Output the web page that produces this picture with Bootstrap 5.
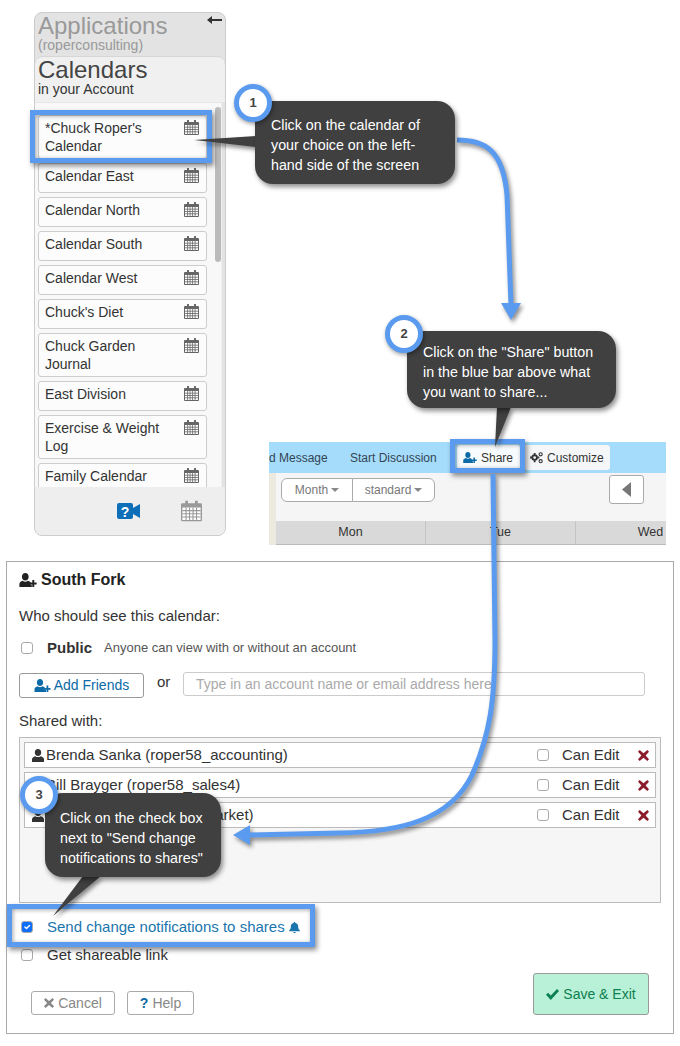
<!DOCTYPE html>
<html lang="en">
<head>
    <meta charset="UTF-8">
    <meta name="viewport" content="width=device-width, initial-scale=1.0">
    <title>Share a calendar</title>
    <link href="https://cdn.jsdelivr.net/npm/bootstrap@5.3.0/dist/css/bootstrap.min.css" rel="stylesheet">
    <style>
        body { font-family: "Liberation Sans", Arial, sans-serif; background: #fff; color: #333; margin: 0; }
        .sheet { width: 680px; height: 1046px; overflow: hidden; }
        .ico { display: inline-block; fill: currentColor; flex: none; }

        /* sidebar */
        .top-area { padding-top: 12px; height: 545px; }
        .apps { width: 192px; height: 524px; margin-left: 34px; background: #e3e3e3; border: 1px solid #ccc; border-radius: 8px; overflow: hidden; }
        .apps-head { height: 43px; padding: 0 3px; color: #999; }
        .apps-title { font-size: 24px; line-height: 25px; }
        .apps-sub { font-size: 14px; line-height: 14px; }
        .back-ico { color: #333; margin-top: 3px; }
        .cal-head { height: 46px; background: #f0f0f0; border-radius: 8px 8px 0 0; border-top: 1px solid #d6d6d6; padding: 0 3px; color: #444; }
        .cal-title { font-size: 24px; line-height: 25px; }
        .cal-sub { font-size: 14px; line-height: 15px; color: #333; }
        .cal-scroll { height: 386px; background: #f8f8f8; overflow: hidden; padding: 4px 0 0 3px; border-right: 1px solid #eee; border-top: 1px solid #e6e6e6; margin-right: 3px; }
        .cal-list { width: 169px; gap: 4px; margin-top: 8px; flex: none; }
        .cal-item { min-height: 30px; flex: none; padding: 3px 7px 3px 6px; border: 1px solid #ccc; border-radius: 3px; background: #fcfcfc; font-size: 14px; line-height: 18px; color: #333; }
        .cal-item span { width: 128px; }
        .cal-ico { color: #666; margin-top: 1px; }
        .thumb { width: 8px; height: 155px; margin-left: 8px; background: #bbb; border-radius: 4px; }
        .apps-foot { height: 48px; background: #eee; padding-left: 82px; gap: 41px; }

        /* calendar strip */
        .strip { width: 397px; height: 103px; margin: 430px 0 0 43px; background: #f5f5f5; overflow: hidden; }
        .strip-bar { height: 31px; background: #a5dcfb; font-size: 12px; color: #345; }
        .bar-link { width: 81px; }
        .bar-link2 { width: 107px; }
        .bar-btn { height: 25px; border-radius: 3px; background: #f4f6f8; padding: 0 6px; gap: 4px; color: #333; }
        .bar-share { background: #f8fbfd; margin-right: 4px; width: 63px; }
        .bar-share .ico { color: #0d6aa8; }
        .strip-body { border-left: 7px solid #ece9de; height: 72px; }
        .strip-tools { height: 48px; padding: 5px 22px 0 5px; }
        .view-btn { height: 24px; padding: 0; font-size: 12px; line-height: 22px; color: #777; background: #fff; border: 1px solid #aaa; }
        .view-month { width: 72px; }
        .view-std { width: 83px; }
        .caret-dn { display: inline-block; border: 4px solid transparent; border-top-color: #888; border-bottom-width: 0; margin-left: 3px; vertical-align: 2px; }
        .prev-btn { width: 35px; height: 29px; margin-top: -3px; padding: 0; background: #fff; border: 1px solid #aaa; border-radius: 3px; }
        .day-row { height: 24px; background: #d9d9d9; border-bottom: 1px solid #bbb; font-size: 12.5px; line-height: 23px; color: #333; width: 450px; }
        .day-cell { width: 150px; flex: none; text-align: center; border-right: 1px solid #c4c4c4; }

        /* dialog */
        .share-dlg { width: 668px; height: 473px; margin: 16px 0 0 6px; border: 1px solid #aaa; padding: 8px 12px 0; font-size: 15px; line-height: 20px; color: #333; }
        .dlg-title { font-size: 16px; font-weight: 700; color: #222; gap: 4px; }
        .dlg-who { margin-top: 16px; }
        .check-row { margin-top: 12px; padding-left: 2px; }
        .form-check-input.tick { width: 12px; height: 12px; margin: 0 14px 0 0; flex: none; border-color: #aaa; border-radius: 3px; }
        .pub-label { font-weight: 700; margin-right: 12px; }
        .pub-note { font-size: 13px; color: #555; }
        .add-row { margin-top: 14px; }
        .add-btn { width: 125px; height: 25px; padding: 0; margin-top: 1px; background: #fff; border: 1px solid #999; border-radius: 3px; color: #0d6aa8; font-size: 14px; gap: 3px; }
        .add-or { width: 39px; padding-left: 13px; }
        .add-input { width: 462px; height: 24px; padding: 0 12px; font-size: 14px; border: 1px solid #ccc; border-radius: 3px; }
        .add-input::placeholder { color: #aaa; }
        .shared-label { margin-top: 13px; }
        .shared-box { height: 166px; margin-top: 6px; padding: 4px; gap: 4px; background: #f6f6f6; border: 1px solid #bbb; }
        .shared-row { height: 26px; background: #fff; border: 1px solid #bbb; padding-left: 7px; }
        .shared-name { width: 505px; gap: 2px; }
        .shared-can { width: 76px; }
        .shared-row .form-check-input.tick { margin-right: 13px; }
        .del-x { color: #8c1c2c; }
        .send-row { margin-top: 14px; color: #1a75ad; }
        .send-row .ico { margin-left: 4px; }
        .get-row { margin-top: 8px; }
        .dlg-foot { margin-top: 8px; padding: 0 12px; height: 42px; }
        .foot-btn { height: 24px; padding: 0; background: #fff; border: 1px solid #aaa; border-radius: 3px; color: #888; font-size: 14px; gap: 4px; }
        .cancel-btn { width: 84px; margin-right: 12px; }
        .help-btn { width: 67px; }
        .help-btn b { color: #0d6aa8; }
        .save-btn { width: 116px; height: 42px; padding: 0; background: #b9f0d8; border: 1px solid #999; border-radius: 3px; color: #0d8050; font-size: 14px; gap: 4px; }

        /* annotations */
        .hl-box { position: absolute; border: 5px solid #5a9bef; box-shadow: 2px 3px 5px rgba(0,0,0,.45), inset 1px 1px 4px rgba(0,0,0,.35); }
        #hl1 { left: 30px; top: 110px; width: 182px; height: 53px; }
        #hl2 { left: 450px; top: 439px; width: 75px; height: 34px; }
        #hl3 { left: 7px; top: 904px; width: 308px; height: 43px; }
        .arrows { position: absolute; left: 0; top: 0; filter: drop-shadow(2px 3px 2px rgba(0,0,0,.45)); }
        .tip-box { position: absolute; background: #404040; color: #fff; border-radius: 18px; font-size: 14.25px; line-height: 20px; box-shadow: 2px 3px 5px rgba(0,0,0,.45); }
        #tip1 { left: 255px; top: 101px; width: 200px; height: 83px; padding: 14px 16px; }
        #tip2 { left: 407px; top: 331px; width: 209px; height: 77px; padding: 11px 16px; }
        #tip3 { left: 45px; top: 793px; width: 176px; height: 84px; padding: 15px 15px; }
        .num { position: absolute; width: 38px; height: 38px; border: 5px solid #5a9bef; border-radius: 50%; background: #fff; font-size: 13px; font-weight: 700; line-height: 28px; text-align: center; color: #444; box-shadow: 1px 2px 4px rgba(0,0,0,.4); }
        #num1 { left: 234px; top: 84px; }
        #num2 { left: 385px; top: 315px; }
        #num3 { left: 20px; top: 776px; }
    </style>
</head>
<body>
    <svg width="0" height="0" class="position-absolute">
        <symbol id="i-cal" viewBox="0 0 15 15">
            <path d="M3 2V.8a1 1 0 0 1 2 0V2h5V.8a1 1 0 0 1 2 0V2h2a1 1 0 0 1 1 1v11a1 1 0 0 1-1 1H1a1 1 0 0 1-1-1V3a1 1 0 0 1 1-1z" fill="currentColor"/>
            <path d="M1 5h13v9H1z" fill="#fff"/>
            <path d="M1 7.2h13M1 9.5h13M1 11.8h13M3.6 5v9M6.1 5v9M8.6 5v9M11.1 5v9" stroke="currentColor" stroke-width=".8" fill="none"/>
        </symbol>
        <symbol id="i-user-plus" viewBox="0 0 16 13">
            <path d="M5.5 0C7.4 0 8.6 1.4 8.6 3.4S7.5 7 5.5 7 2.4 5.4 2.4 3.4 3.6 0 5.5 0zM0 13v-2.6C0 8.7 1.3 7.700 3.100 7.200c.7.6 1.500.9 2.400.9s1.700-.3 2.400-.9c1 .3 1.800.7 2.400 1.300V11h1.200v2z"/>
            <path d="M12 6.500h1.800v2.400H16v1.800h-2.200V13H12v-2.300H9.800V8.900H12z"/>
        </symbol>
        <symbol id="i-user" viewBox="0 0 12 13">
            <path d="M6 0c2 0 3.200 1.400 3.200 3.400S8 7 6 7 2.800 5.400 2.800 3.400 4 0 6 0zM0 13v-2.600C0 8.700 1.400 7.700 3.300 7.200c.7.600 1.700.9 2.700.9s2-.3 2.700-.9c1.900.5 3.300 1.500 3.300 3.200V13z"/>
        </symbol>
        <symbol id="i-x" viewBox="0 0 12 12">
            <path d="M1.800 0L6 3.500 10.200 0 12 2 8.300 6 12 10l-1.800 2L6 8.500 1.800 12 0 10l3.700-4L0 2z"/>
        </symbol>
        <symbol id="i-gears" viewBox="0 0 14 13">
            <path d="M5 2.500a3.500 3.500 0 1 1 0 7 3.500 3.500 0 0 1 0-7zm0 2a1.500 1.500 0 1 0 0 3 1.500 1.500 0 0 0 0-3z"/>
            <path d="M4 1h2v2H4zM4 9h2v2H4zM0 5h2v2H0zM8 5h2v2H8z"/>
            <circle cx="11.500" cy="2.500" r="1.700" fill="none" stroke="currentColor" stroke-width="1.200"/>
            <circle cx="11.500" cy="10" r="1.700" fill="none" stroke="currentColor" stroke-width="1.200"/>
        </symbol>
        <symbol id="i-bell" viewBox="0 0 12 12">
            <path d="M6 0a1 1 0 0 1 1 1c2 .4 3 1.900 3 4 0 2 .5 3 2 4.500V10H0v-.5C1.500 8 2 7 2 5c0-2.100 1-3.600 3-4a1 1 0 0 1 1-1zM4.500 10.800h3a1.500 1.200 0 0 1-3 0z"/>
        </symbol>
        <symbol id="i-check" viewBox="0 0 13 11">
            <path d="M0 5.800L2 3.800 4.800 6.600 11 0l2 2-8.200 9z"/>
        </symbol>
    </svg>

    <div class="sheet position-relative">
        <div class="top-area d-flex">
            <div class="apps d-flex flex-column">
                <div class="apps-head d-flex justify-content-between">
                    <div>
                        <div class="apps-title">Applications</div>
                        <div class="apps-sub">(roperconsulting)</div>
                    </div>
                    <svg class="back-ico" width="15" height="8" viewBox="0 0 15 8"><path d="M5 0v3h10v2H5v3L0 4z" fill="currentColor"/></svg>
                </div>
                <div class="cal-head">
                    <div class="cal-title">Calendars</div>
                    <div class="cal-sub">in your Account</div>
                </div>
                <div class="cal-scroll d-flex">
                    <div class="cal-list d-flex flex-column">
                        <div class="cal-item d-flex justify-content-between"><span>*Chuck Roper's Calendar</span><svg class="ico cal-ico" width="15" height="15"><use href="#i-cal"/></svg></div>
                        <div class="cal-item d-flex justify-content-between"><span>Calendar East</span><svg class="ico cal-ico" width="15" height="15"><use href="#i-cal"/></svg></div>
                        <div class="cal-item d-flex justify-content-between"><span>Calendar North</span><svg class="ico cal-ico" width="15" height="15"><use href="#i-cal"/></svg></div>
                        <div class="cal-item d-flex justify-content-between"><span>Calendar South</span><svg class="ico cal-ico" width="15" height="15"><use href="#i-cal"/></svg></div>
                        <div class="cal-item d-flex justify-content-between"><span>Calendar West</span><svg class="ico cal-ico" width="15" height="15"><use href="#i-cal"/></svg></div>
                        <div class="cal-item d-flex justify-content-between"><span>Chuck's Diet</span><svg class="ico cal-ico" width="15" height="15"><use href="#i-cal"/></svg></div>
                        <div class="cal-item d-flex justify-content-between"><span>Chuck Garden Journal</span><svg class="ico cal-ico" width="15" height="15"><use href="#i-cal"/></svg></div>
                        <div class="cal-item d-flex justify-content-between"><span>East Division</span><svg class="ico cal-ico" width="15" height="15"><use href="#i-cal"/></svg></div>
                        <div class="cal-item d-flex justify-content-between"><span>Exercise &amp; Weight Log</span><svg class="ico cal-ico" width="15" height="15"><use href="#i-cal"/></svg></div>
                        <div class="cal-item d-flex justify-content-between"><span>Family Calendar</span><svg class="ico cal-ico" width="15" height="15"><use href="#i-cal"/></svg></div>
                    </div>
                    <div class="thumb"></div>
                </div>
                <div class="apps-foot d-flex align-items-center">
                    <svg width="23" height="16" viewBox="0 0 23 16">
                        <path d="M2 0h12a2 2 0 0 1 2 2v3l7-4v14l-7-4v3a2 2 0 0 1-2 2H2a2 2 0 0 1-2-2V2a2 2 0 0 1 2-2z" fill="#0d6fb8"/>
                        <text x="8" y="13.500" font-size="14" font-weight="700" fill="#fff" text-anchor="middle" font-family="Liberation Sans, sans-serif">?</text>
                    </svg>
                    <svg class="ico" width="21" height="22" viewBox="0 0 15 15" color="#999"><use href="#i-cal"/></svg>
                </div>
            </div>

            <div class="strip">
                <div class="strip-bar d-flex align-items-center">
                    <span class="bar-link">d Message</span>
                    <span class="bar-link2">Start Discussion</span>
                    <span class="bar-btn bar-share d-flex align-items-center"><svg class="ico" width="14" height="11"><use href="#i-user-plus"/></svg>Share</span>
                    <span class="bar-btn d-flex align-items-center"><svg class="ico" width="13" height="12"><use href="#i-gears"/></svg>Customize</span>
                </div>
                <div class="strip-body">
                    <div class="strip-tools d-flex justify-content-between">
                        <div class="btn-group align-self-start">
                            <button class="btn view-btn view-month">Month<i class="caret-dn"></i></button>
                            <button class="btn view-btn view-std">standard<i class="caret-dn"></i></button>
                        </div>
                        <button class="btn prev-btn d-flex align-items-center justify-content-center">
                            <svg width="9" height="15" viewBox="0 0 9 15"><path d="M9 0v15L0 7.500z" fill="#777"/></svg>
                        </button>
                    </div>
                    <div class="day-row d-flex">
                        <div class="day-cell">Mon</div>
                        <div class="day-cell">Tue</div>
                        <div class="day-cell">Wed</div>
                    </div>
                </div>
            </div>
        </div>

        <div class="share-dlg">
            <div class="dlg-title d-flex align-items-center">
                <svg class="ico" width="18" height="14"><use href="#i-user-plus"/></svg>South Fork
            </div>
            <div class="dlg-who">Who should see this calendar:</div>
            <div class="check-row d-flex align-items-center">
                <input class="form-check-input tick" type="checkbox">
                <span class="pub-label">Public</span>
                <span class="pub-note">Anyone can view with or without an account</span>
            </div>
            <div class="add-row d-flex align-items-start">
                <button class="btn add-btn d-flex align-items-center justify-content-center"><svg class="ico" width="17" height="13"><use href="#i-user-plus"/></svg>Add Friends</button>
                <span class="add-or">or</span>
                <input class="form-control add-input" type="text" placeholder="Type in an account name or email address here">
            </div>
            <div class="shared-label">Shared with:</div>
            <div class="shared-box d-flex flex-column">
                <div class="shared-row d-flex align-items-center">
                    <span class="shared-name d-flex align-items-center"><svg class="ico" width="12" height="13"><use href="#i-user"/></svg>Brenda Sanka (roper58_accounting)</span>
                    <input class="form-check-input tick" type="checkbox">
                    <span class="shared-can">Can Edit</span>
                    <svg class="ico del-x" width="11" height="11"><use href="#i-x"/></svg>
                </div>
                <div class="shared-row d-flex align-items-center">
                    <span class="shared-name d-flex align-items-center"><svg class="ico" width="12" height="13"><use href="#i-user"/></svg>Bill Brayger (roper58_sales4)</span>
                    <input class="form-check-input tick" type="checkbox">
                    <span class="shared-can">Can Edit</span>
                    <svg class="ico del-x" width="11" height="11"><use href="#i-x"/></svg>
                </div>
                <div class="shared-row d-flex align-items-center">
                    <span class="shared-name d-flex align-items-center"><svg class="ico" width="12" height="13"><use href="#i-user"/></svg>Chuck Roper (roper58_market)</span>
                    <input class="form-check-input tick" type="checkbox">
                    <span class="shared-can">Can Edit</span>
                    <svg class="ico del-x" width="11" height="11"><use href="#i-x"/></svg>
                </div>
            </div>
            <div class="check-row send-row d-flex align-items-center">
                <input class="form-check-input tick" type="checkbox" checked>
                <span>Send change notifications to shares</span>
                <svg class="ico" width="11" height="11"><use href="#i-bell"/></svg>
            </div>
            <div class="check-row get-row d-flex align-items-center">
                <input class="form-check-input tick" type="checkbox">
                <span>Get shareable link</span>
            </div>
            <div class="dlg-foot d-flex justify-content-between align-items-end">
                <div class="d-flex">
                    <button class="btn foot-btn cancel-btn d-flex align-items-center justify-content-center"><svg class="ico" width="10" height="10"><use href="#i-x"/></svg>Cancel</button>
                    <button class="btn foot-btn help-btn d-flex align-items-center justify-content-center"><b>?</b>Help</button>
                </div>
                <button class="btn save-btn d-flex align-items-center justify-content-center"><svg class="ico" width="13" height="11"><use href="#i-check"/></svg>Save &amp; Exit</button>
            </div>
        </div>

        <div class="hl-box" id="hl1"></div>
        <div class="hl-box" id="hl2"></div>
        <div class="hl-box" id="hl3"></div>

        <svg class="arrows" width="680" height="1046" viewBox="0 0 680 1046">
            <path d="M457 140C485 140 503 150 507 195L511 305" fill="none" stroke="#5a9bef" stroke-width="5"/>
            <path d="M501 303h20l-10 17z" fill="#5a9bef"/>
            <path d="M493 474L495 640C495 700 490 735 472 775C450 820 400 832 340 833L250 835" fill="none" stroke="#5a9bef" stroke-width="5"/>
            <path d="M233 835l17-10v20z" fill="#5a9bef"/>
            <path d="M194 140L256 136V147z" fill="#404040"/>
            <path d="M495 447L497 407H511z" fill="#404040"/>
            <path d="M53 916L83 876H101z" fill="#404040"/>
        </svg>

        <div class="tip-box" id="tip1">Click on the calendar of your choice on the left-hand side of the screen</div>
        <div class="tip-box" id="tip2">Click on the "Share" button in the blue bar above what you want to share...</div>
        <div class="tip-box" id="tip3">Click on the check box next to "Send change notifications to shares"</div>
        <div class="num" id="num1">1</div>
        <div class="num" id="num2">2</div>
        <div class="num" id="num3">3</div>
    </div>

    <script src="https://cdn.jsdelivr.net/npm/bootstrap@5.3.0/dist/js/bootstrap.bundle.min.js"></script>
</body>
</html>
